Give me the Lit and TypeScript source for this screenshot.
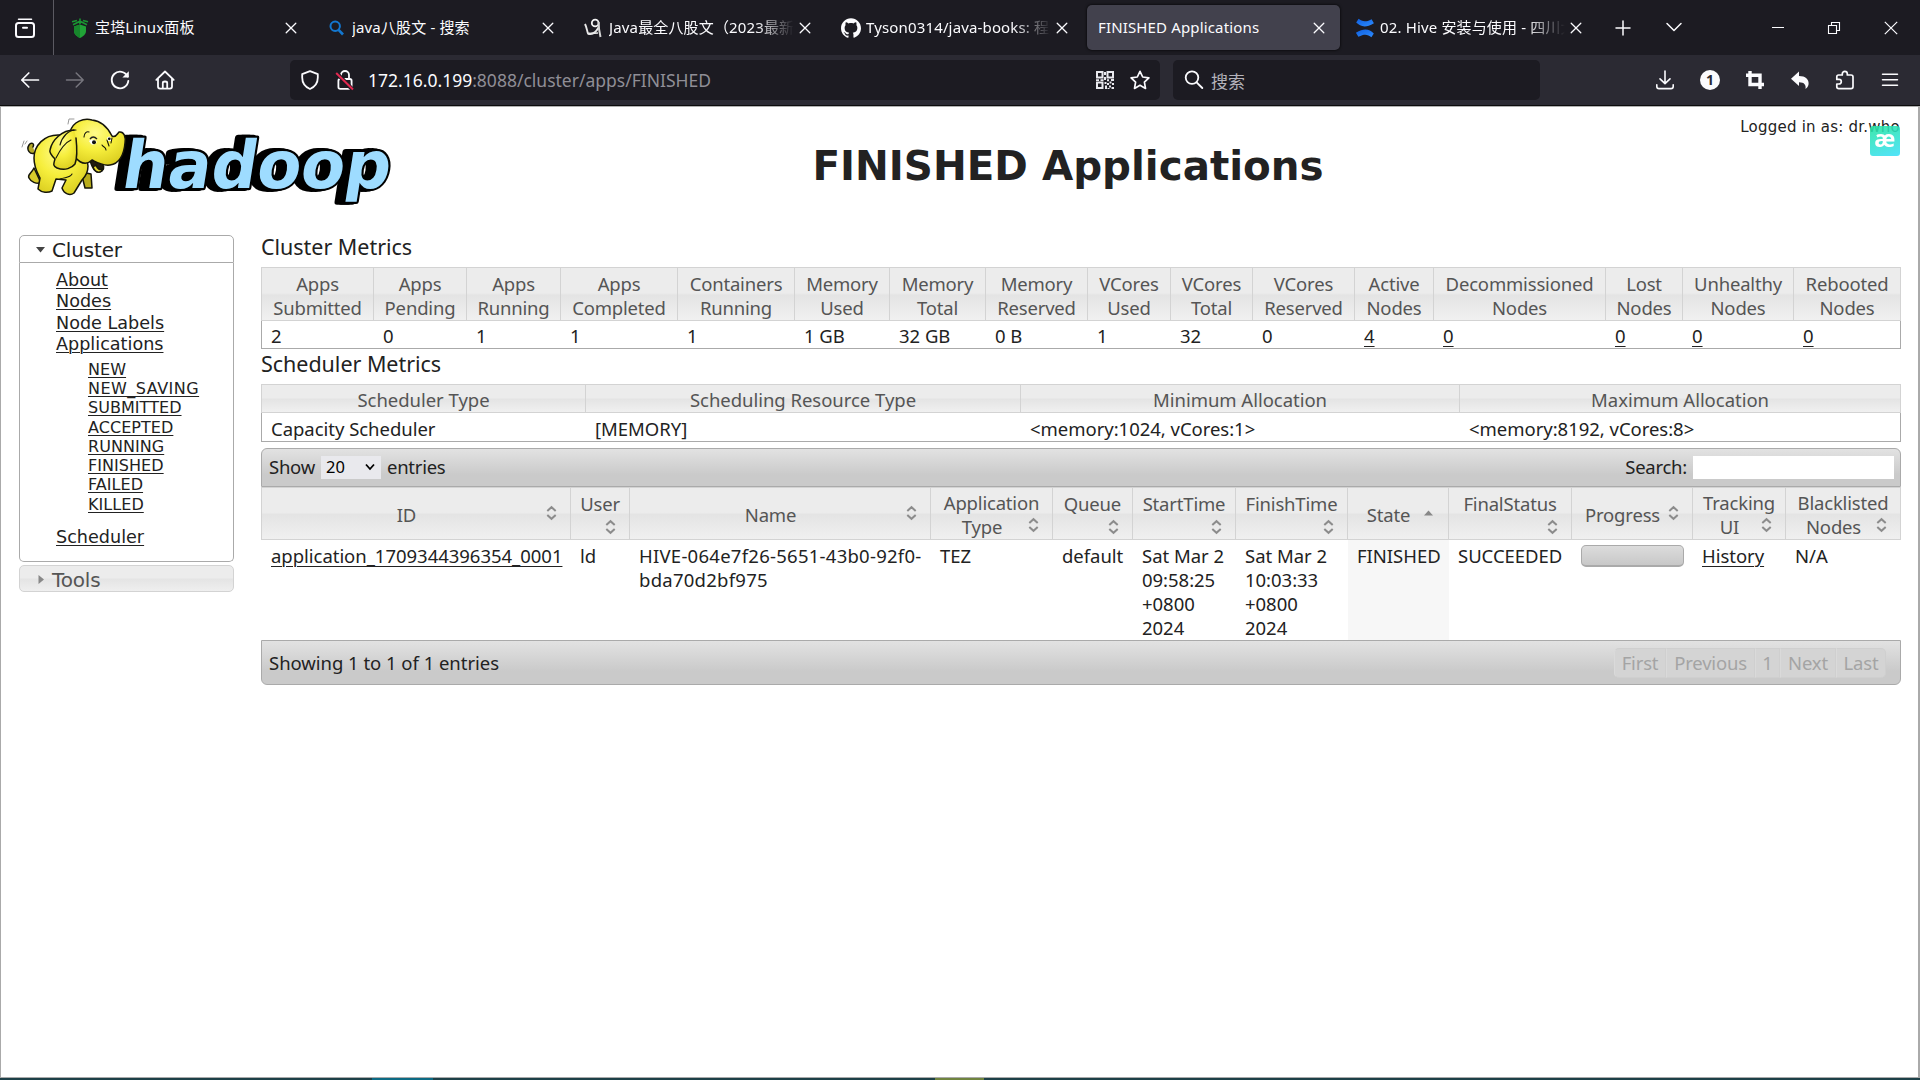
import { LitElement, html, svg, css, nothing } from "lit";
import { customElement } from "lit/decorators.js";

const columns = (cuts: number[]) =>
  `grid-template-columns:${cuts.slice(1).map((c, i) => `${c - cuts[i]}px`).join(" ")}`;

const base = css`
  * { box-sizing: border-box; }
  :host { display: block; font-family: "Noto Sans", "Noto Sans CJK SC", sans-serif; }
  svg { display: block; flex: none; overflow: visible; }
`;

/* ---------- browser chrome ---------- */

const stroke = (d: string, w = 1.6, color = "#fbfbfe") =>
  svg`<path d=${d} fill="none" stroke=${color} stroke-width=${w} stroke-linecap="round" stroke-linejoin="round"/>`;

const ic = (content: unknown, size = 20) =>
  html`<svg width=${size} height=${size} viewBox="0 0 20 20">${content}</svg>`;

const icons = {
  view: ic(svg`${stroke("M3.5 1.3H16.5", 1.5)}<rect x="1" y="5" width="18" height="14" rx="2.5" fill="none" stroke="#fbfbfe" stroke-width="2"/>${stroke("M8 9.8H12", 2)}`),
  bt: ic(svg`<path d="M4 8.5L10 6.5L16 8.5V13C16 16.5 13 18.5 10 20C7 18.5 4 16.5 4 13Z" fill="#21a437"/><path d="M4 8.5L10 6.5V20C7 18.5 4 16.5 4 13Z" fill="#17862c"/><path d="M2 3.8L7 2.4M10 .5V6M18 3.8L13 2.4M3 6.8L10 3.2L17 6.8" stroke="#1a9632" stroke-width="1.6" fill="none"/>`),
  bing: ic(svg`<circle cx="8.2" cy="8.2" r="4.7" fill="none" stroke="#1377d0" stroke-width="2"/><path d="M11.6 11.8L16 16.5" stroke="#1377d0" stroke-width="2.6"/>`),
  nine: ic(svg`<path d="M1 6C3 10 3 13 4 15.5C8 17 12 14 14.5 9.5" fill="none" stroke="#e8e8e8" stroke-width="1.9"/><circle cx="11.2" cy="5" r="3.4" fill="none" stroke="#f4f4f4" stroke-width="1.8"/><path d="M14.6 4C14.6 9 14.8 12 16.5 19" fill="none" stroke="#d5d5d5" stroke-width="2"/><path d="M4 15.6L14 15" stroke="#e8e8e8" stroke-width="1.6"/>`),
  github: html`<svg width="20" height="20" viewBox="0 0 24 24"><path fill="#fbfbfe" d="M12 .297c-6.63 0-12 5.373-12 12 0 5.303 3.438 9.8 8.205 11.385.6.113.82-.258.82-.577 0-.285-.01-1.04-.015-2.04-3.338.724-4.042-1.61-4.042-1.61C4.422 18.07 3.633 17.7 3.633 17.7c-1.087-.744.084-.729.084-.729 1.205.084 1.838 1.236 1.838 1.236 1.07 1.835 2.809 1.305 3.495.998.108-.776.417-1.305.76-1.605-2.665-.3-5.466-1.332-5.466-5.93 0-1.31.465-2.38 1.235-3.22-.135-.303-.54-1.523.105-3.176 0 0 1.005-.322 3.3 1.23.96-.267 1.98-.399 3-.405 1.02.006 2.04.138 3 .405 2.28-1.552 3.285-1.23 3.285-1.23.645 1.653.24 2.873.12 3.176.765.84 1.23 1.91 1.23 3.22 0 4.61-2.805 5.625-5.475 5.92.42.36.81 1.096.81 2.22 0 1.606-.015 2.896-.015 3.286 0 .315.21.69.825.57C20.565 22.092 24 17.592 24 12.297c0-6.627-5.373-12-12-12"/></svg>`,
  confluence: ic(svg`<defs><linearGradient id="cf" x1="0" y1="0" x2="1" y2="1"><stop offset="0" stop-color="#0f5fe0"/><stop offset="1" stop-color="#2d8cff"/></linearGradient></defs><path d="M1.2 4.6L3.6 .8C7 3.3 10 4.8 16.6 1.2L18.9 5.2C10 10.6 5.5 8.3 1.2 4.6Z" fill="url(#cf)"/><path d="M18.8 15.4L16.4 19.2C13 16.7 10 15.2 3.4 18.8L.9 14.8C10 9.4 14.5 11.7 18.8 15.4Z" fill="url(#cf)"/>`),
  close: html`<svg width="12" height="12" viewBox="0 0 12 12">${stroke("M1.2 1.2L10.8 10.8M10.8 1.2L1.2 10.8", 1.3)}</svg>`,
  back: ic(stroke("M18.5 10H1.8M8.8 3L1.8 10L8.8 17", 1.7)),
  forward: ic(stroke("M1.5 10H18.2M11.2 3L18.2 10L11.2 17", 1.5, "#77767e")),
  reload: ic(svg`${stroke("M17.6 6.5A8.3 8.3 0 1 0 18.3 11", 1.9)}<path d="M18.8 1.2V7.6H12.4Z" fill="#fbfbfe"/>`),
  home: ic(svg`${stroke("M1.3 9.8L10 1.5L18.7 9.8M3 8.8V16.6Q3 18.6 5 18.6H15Q17 18.6 17 16.6V8.8M7.8 18.2V13Q7.8 11.5 10 11.5Q12.2 11.5 12.2 13V18.2", 1.8)}`),
  shield: ic(stroke("M10 1.2L17.8 4.2V7.5C17.8 13 14.5 17 10 19C5.500 17 2.200 13 2.200 7.500V4.200Z", 1.8)),
  lock: ic(svg`<rect x="3.4" y="9" width="13.2" height="9.8" rx="1.8" fill="none" stroke="#fbfbfe" stroke-width="1.8"/>${stroke("M6 8.500V5A4 4 0 0 1 14 5V8.500", 1.8)}<path d="M1.500 3L17.500 19.500" stroke="#1c1b22" stroke-width="4"/><path d="M1.200 3L18 19.500" stroke="#e22850" stroke-width="2"/>`),
  qr: ic(svg`<g fill="none" stroke="#e9e9ee" stroke-width="2"><rect x="2" y="2" width="5.500" height="5.500"/><rect x="12.500" y="2" width="5.500" height="5.500"/><rect x="2" y="12.500" width="5.500" height="5.500"/></g><path fill="#e9e9ee" d="M9 2h2v3H9zM9 7h2v3H9zM1 9.200h3v1.800H1zM5.500 9.200h3v1.800h-3zM12 9.200h2v2h-2zM16 9h3v2h-3zM9.500 12h2v2h-2zM12 13h2v2h-2zM14.500 11.500h2v2h-2zM17 13h2v2h-2zM10 15.500h2v3.500h-2zM14 15.500h2v2h-2zM16.500 17h2.500v2h-2.500zM12.500 18h2v1h-2z"/>`),
  star: ic(stroke("M10 1.300L12.700 7L18.900 7.800L14.400 12.100L15.500 18.400L10 15.300L4.500 18.400L5.600 12.100L1.100 7.800L7.300 7Z", 1.7)),
  search: ic(svg`<circle cx="8" cy="7.600" r="6.300" fill="none" stroke="#fbfbfe" stroke-width="1.800"/>${stroke("M12.600 12.400L18.300 18", 1.900)}`),
  download: ic(stroke("M10 1V13.500M5 8.800L10 13.600L15 8.800M1.800 14.800V16.500Q1.800 18.600 4 18.600H16Q18.200 18.600 18.200 16.500V14.800", 1.600)),
  crop: ic(svg`<path d="M5 1V14.500H19M1 5.200H15V19" fill="none" stroke="#fbfbfe" stroke-width="3.400"/>`),
  undo: ic(svg`<path d="M9 1.500V6C15.500 6 19 9.500 18.600 14C18.400 16 17 18 15.500 19C16.200 15 14.500 12.200 9 12.200V16L1 8.700Z" fill="#fbfbfe"/>`),
  puzzle: ic(stroke("M1.800 7.500V6.800Q1.800 5 3.600 5H7.300V3.800A2.500 2.500 0 0 1 12.300 3.800V5H16Q18 5 18 7V16.800Q18 18.700 16 18.700H3.800Q1.800 18.700 1.800 16.800V14H4A2.300 2.300 0 0 0 4 9.400H1.800Z", 1.700)),
  menu: ic(stroke("M2.500 4.300H17.500M2.500 9.800H17.500M2.500 15.300H17.500", 1.500)),
  plus: html`<svg width="16" height="16" viewBox="0 0 16 16">${stroke("M8 1V15M1 8H15", 1.500)}</svg>`,
  chevron: html`<svg width="16" height="16" viewBox="0 0 16 16">${stroke("M1 3.500L8 10.500L15 3.500", 1.500)}</svg>`,
  min: html`<svg width="12" height="12" viewBox="0 0 12 12"><path d="M0 5.500H12" stroke="#fbfbfe"/></svg>`,
  restore: html`<svg width="12" height="12" viewBox="0 0 12 12"><path d="M.5 3.500H8.500V11.500H.5ZM3.500 3V.5H11.500V8.500H9" fill="none" stroke="#fbfbfe" stroke-width="1.100"/></svg>`,
  winClose: html`<svg width="14" height="14" viewBox="0 0 14 14"><path d="M.8 .8L13.200 13.200M13.200 .8L.8 13.200" stroke="#fbfbfe" stroke-width="1.200"/></svg>`,
};

const TABS = [
  { icon: icons.bt, title: "宝塔Linux面板" },
  { icon: icons.bing, title: "java八股文 - 搜索" },
  { icon: icons.nine, title: "Java最全八股文（2023最新整", fade: true },
  { icon: icons.github, title: "Tyson0314/java-books: 程序", fade: true },
  { icon: null, title: "FINISHED Applications", active: true },
  { icon: icons.confluence, title: "02. Hive 安装与使用 - 四川大", fade: true },
];

@customElement("browser-chrome")
export class BrowserChrome extends LitElement {
  static styles = [base, css`
    .tabs { display: flex; height: 55px; background: #1c1b22; color: #fbfbfe; }
    .view { width: 54px; display: flex; align-items: center; justify-content: center; padding-right: 4px; border-right: 1px solid #5b5a62; }
    .strip { display: flex; gap: 4px; padding: 5px 0 5px 5px; }
    .tab { width: 253px; height: 45px; padding: 0 15px 0 11px; display: flex; align-items: center; border-radius: 5px; font-size: 15px; letter-spacing: 0.15px; }
    .active { background: #42414d; box-shadow: 0 0 3px #000; }
    .icon { width: 25px; flex: none; }
    .title { flex: 1; min-width: 0; white-space: nowrap; overflow: hidden; line-height: 22px; padding-bottom: 1px; }
    .fade { margin-right: 1px; -webkit-mask-image: linear-gradient(to left, transparent 4px, #000 42px); mask-image: linear-gradient(to left, transparent 4px, #000 42px); }
    .extra { display: flex; align-items: center; gap: 35px; padding-left: 18px; }
    .window { display: flex; align-items: center; gap: 44px; margin-left: auto; padding-right: 22px; }
    .bar { display: flex; align-items: center; height: 50px; background: #2b2a33; padding: 0 20px; }
    .nav { display: flex; gap: 25px; width: 270px; }
    .field { height: 40px; border-radius: 5px; background: #1c1b22; display: flex; align-items: center; color: #fbfbfe; font-size: 17.500px; letter-spacing: 0; white-space: nowrap; }
    .url { width: 870px; padding: 0 10px 0 10px; gap: 15px; }
    .address { flex: 1; margin-left: -2px; }
    .dim { color: #8f8e96; }
    .find { width: 367px; margin-left: 13px; padding-left: 11px; gap: 7px; color: #b4b3ba; font-size: 17px; }
    .tools { display: flex; align-items: center; gap: 25px; margin-left: auto; }
    .count { width: 20px; height: 20px; border-radius: 50%; background: #fbfbfe; color: #2b2a33; font: bold 14px/20px "Noto Sans", sans-serif; text-align: center; }
    .edge { height: 2px; background: #b0b0b0; border-top: 1px solid #0c0c0d; }
  `];
  render() {
    return html`
      <div class="tabs">
        <div class="view">${icons.view}</div>
        <div class="strip">
          ${TABS.map(t => html`<div class="tab ${t.active ? "active" : ""}">
            ${t.icon ? html`<span class="icon">${t.icon}</span>` : nothing}
            <span class="title ${t.fade ? "fade" : ""}">${t.title}</span>${icons.close}
          </div>`)}
        </div>
        <div class="extra">${icons.plus}${icons.chevron}</div>
        <div class="window">${icons.min}${icons.restore}${icons.winClose}</div>
      </div>
      <div class="bar">
        <div class="nav">${icons.back}${icons.forward}${icons.reload}${icons.home}</div>
        <div class="field url">${icons.shield}${icons.lock}
          <span class="address">172.16.0.199<span class="dim">:8088/cluster/apps/FINISHED</span></span>
          ${icons.qr}${icons.star}</div>
        <div class="field find">${icons.search}<span>搜索</span></div>
        <div class="tools">${icons.download}<span class="count">1</span>${icons.crop}${icons.undo}${icons.puzzle}${icons.menu}</div>
      </div>
      <div class="edge"></div>`;
  }
}

/* ---------- hadoop logo ---------- */

@customElement("hadoop-logo")
export class HadoopLogo extends LitElement {
  static styles = [base, css`
    .word { font: bold 66px "DejaVu Sans", sans-serif; }
  `];
  render() {
    const word = (x: number, y: number, fill: string, w: number, line: string) => svg`
      <text class="word" transform="translate(${x} ${y}) skewX(-9)" textLength="268" lengthAdjust="spacingAndGlyphs"
        fill=${fill} stroke=${line} stroke-width=${w} stroke-linejoin="round" paint-order="stroke">hadoop</text>`;
    return html`<svg width="374" height="92" viewBox="20 116 374 92">
      <defs>
        <radialGradient id="skin" cx=".45" cy=".3" r=".75"><stop offset="0" stop-color="#fffb8a"/><stop offset=".5" stop-color="#f6ee3c"/><stop offset="1" stop-color="#d9cc1e"/></radialGradient>
      </defs>
      ${word(112, 188, "#000", 6, "#000")}
      ${word(116, 188, "#000", 6, "#000")}
      ${word(120, 188, "#9edcff", 4.500, "#000")}
      <g stroke="#16160a" stroke-width="1.500" stroke-linejoin="round" stroke-linecap="round">
        <path d="M35 153C30 155 26 150 29 145C31 142 35 143 33 147" fill="#b5a92a"/>
        <path d="M22 147L24 141M25 144L27 141M68 124L69 119L74 119" fill="none" stroke="#999" stroke-width="1"/>
        <path d="M81 172L85 188H92L91 174Z" fill="#b9ad1c"/>
        <path d="M34 168C31 174 27 175 29 178C31 182 36 184 41 183Z" fill="#d9cc2c"/>
        <path d="M60 135C44 134 34 146 34 158C34 168 38 174 40 178L38 189C42 193 48 193 52 191L56 179L66 180L62 188C64 194 70 196 74 193L82 180C86 176 88 172 88 166L84 140Z" fill="url(#skin)"/>
        <path d="M90 160C93 172 98 174 102 171C105 168 104 165 100 162Z" fill="#221c10"/>
        <path d="M93 167C96 174 101 173 103 169Q98 171 96 165Z" fill="#e7dc30"/>
        <path d="M70 132C73 121 84 118 92 120C102 121 108 128 112 136C116 138 117 134 119 132C124 131 126 137 125 143C124 155 119 164 110 165C102 166 96 162 92 160C84 168 75 160 72 150Z" fill="url(#skin)"/>
        <path d="M74 130C62 130 52 140 50 150C49 153 52 156 55 159C54 163 52 166 57 168C65 171 72 168 75 164C78 156 77 147 76 138" fill="url(#skin)"/>
        <path d="M76 130C68 130 62 137 60 145M71 140C64 143 60 150 56 158M102 145C103 147 106 147 106 150M107 140L109 146M112 138L111 143M84 137C84 133 87 131 89 132M60 179C66 177 70 178 72 174" fill="none" stroke-width="1.100"/>
      </g>
      <path d="M89 141Q93 137 97 142Q94 146 91 144Z" fill="#fff"/><circle cx="94" cy="142.300" r="2" fill="#111"/>
      <path d="M107 138Q109 135 111 138V141H108Z" fill="#fff"/><circle cx="109.300" cy="138.800" r="1.400" fill="#111"/>
      <path d="M90 139Q93 135 97 139" fill="none" stroke="#222" stroke-width="1.300"/>
    </svg>`;
  }
}

/* ---------- sidebar ---------- */

@customElement("side-menu")
export class SideMenu extends LitElement {
  static styles = [base, css`
    :host { width: 215px; font-family: "DejaVu Sans", Verdana, sans-serif; color: #222; }
    .head { height: 28px; border: 1px solid #aaa; border-radius: 5px 5px 0 0; display: flex; align-items: center; gap: 5px; padding: 2px 0 0 15px; font-size: 20px; letter-spacing: -0.15px; }
    .body { height: 299px; border: 1px solid #aaa; border-top: 0; border-radius: 0 0 5px 5px; padding: 7px 0 0 36px; font-size: 17.600px; line-height: 21.400px; letter-spacing: 0; }
    .closed { margin-top: 3px; height: 27px; border-color: #d3d3d3; border-radius: 5px; color: #555; background: linear-gradient(#ececec 0 48%, #e4e4e4 52%, #efefef); }
    a { display: block; text-decoration: underline; text-underline-offset: 2px; text-decoration-thickness: 1px; }
    .sub { padding: 4px 0 13px 32px; font-size: 16px; line-height: 19.300px; letter-spacing: 0.05px; }
    .wide { letter-spacing: 0.480px; }
  `];
  render() {
    return html`
      <div class="head"><svg width="12" height="12" viewBox="0 0 12 12"><path d="M1 3H10L5.500 8.500Z" fill="#444"/></svg>Cluster</div>
      <div class="body">
        ${["About", "Nodes", "Node Labels", "Applications"].map(x => html`<a>${x}</a>`)}
        <div class="sub">${["NEW", "NEW_SAVING", "SUBMITTED", "ACCEPTED", "RUNNING", "FINISHED", "FAILED", "KILLED"].map(x => html`<a class=${x.includes("_") ? "wide" : ""}>${x}</a>`)}</div>
        <a>Scheduler</a>
      </div>
      <div class="head closed"><svg width="12" height="12" viewBox="0 0 12 12"><path d="M3.500 1L9 5.500L3.500 10Z" fill="#888"/></svg>Tools</div>`;
  }
}

/* ---------- content tables ---------- */

const METRIC_CUTS = [261, 373, 466, 560, 677, 794, 889, 985, 1087, 1170, 1252, 1354, 1433, 1605, 1682, 1793, 1901];
const METRICS: [string, string, string, boolean?][] = [
  ["Apps", "Submitted", "2"], ["Apps", "Pending", "0"], ["Apps", "Running", "1"], ["Apps", "Completed", "1"],
  ["Containers", "Running", "1"], ["Memory", "Used", "1 GB"], ["Memory", "Total", "32 GB"], ["Memory", "Reserved", "0 B"],
  ["VCores", "Used", "1"], ["VCores", "Total", "32"], ["VCores", "Reserved", "0"], ["Active", "Nodes", "4", true],
  ["Decommissioned", "Nodes", "0", true], ["Lost", "Nodes", "0", true], ["Unhealthy", "Nodes", "0", true], ["Rebooted", "Nodes", "0", true],
];
const SCHED_CUTS = [261, 585, 1020, 1459, 1901];
const SCHED = [
  ["Scheduler Type", "Capacity Scheduler"], ["Scheduling Resource Type", "[MEMORY]"],
  ["Minimum Allocation", "<memory:1024, vCores:1>"], ["Maximum Allocation", "<memory:8192, vCores:8>"],
];
const APP_CUTS = [261, 570, 629, 930, 1052, 1132, 1235, 1347, 1448, 1571, 1692, 1785, 1901];
type Kind = "one" | "two" | "drop";
const APP_HEADS: [Kind, string, string?][] = [
  ["one", "ID"], ["drop", "User"], ["one", "Name"], ["two", "Application", "Type"], ["drop", "Queue"], ["drop", "StartTime"],
  ["drop", "FinishTime"], ["one", "State"], ["drop", "FinalStatus"], ["one", "Progress"], ["two", "Tracking", "UI"], ["two", "Blacklisted", "Nodes"],
];

const sortBoth = html`<svg class="sort" width="19" height="14" viewBox="0 0 19 14"><path d="M5.300 5L9.500 1.200L13.700 5M5.300 9L9.500 12.800L13.700 9" fill="none" stroke="#8c8c8c" stroke-width="2"/></svg>`;
const sortUp = html`<svg class="sort" width="19" height="14" viewBox="0 0 19 14"><path d="M4 9.500L8.500 4.500L13 9.500Z" fill="#888"/></svg>`;

@customElement("cluster-content")
export class ClusterContent extends LitElement {
  static styles = [base, css`
    :host { width: 1640px; color: #222; font-size: 18.500px; line-height: 24px; letter-spacing: -0.03px; }
    h3 { margin: 0; font-size: 21.500px; font-weight: normal; letter-spacing: -0.03px; }
    .first { height: 32px; line-height: 23px; }
    .second { height: 35px; line-height: 29px; }
    .grid { display: grid; white-space: nowrap; }
    .th { border: 1px solid #d3d3d3; border-right: 0; color: #555; text-align: center; letter-spacing: -0.180px; background: linear-gradient(#ececec 0 48%, #e4e4e4 52%, #f0f0f0); }
    .th:last-child { border-right: 1px solid #d3d3d3; }
    .metric { height: 54px; padding-top: 4px; }
    .sched { height: 29px; padding-top: 3px; letter-spacing: -0.030px; }
    .rows { border: 1px solid #aaa; border-top: 0; height: 28px; padding-top: 3px; }
    .rows .td:first-child { padding-left: 9px; }
    .rows .td:not(:first-child) { margin-left: -1px; }
    .sched-row { height: 29px; padding-top: 4px; }
    .td { padding-left: 10px; }
    .name { letter-spacing: 0.260px; }
    .link { text-decoration: underline; text-underline-offset: 3px; text-decoration-thickness: 1px; }
    .bar { display: flex; align-items: center; border: 1px solid #aaa; background: linear-gradient(#e2e2e2, #cacaca 70%, #cacaca); padding: 0 6px 0 7px; }
    .top { height: 39px; margin-top: 6px; border-radius: 6px 6px 0 0; padding-bottom: 1px; letter-spacing: -0.250px; }
    .bottom { height: 45px; border-radius: 0 0 6px 6px; padding-right: 14px; }
    .select { width: 60px; height: 23px; margin: 0 6px; padding: 0 6px 0 5px; background: #e9e9ed; display: flex; align-items: center; justify-content: space-between; color: #000; font-size: 16.500px; letter-spacing: 0; }
    .search { margin-left: auto; }
    .input { width: 201px; height: 23px; background: #fff; margin-left: 6px; }
    .head { height: 53px; display: flex; flex-direction: column; padding: 3px 9px 0 9px; }
    .head div { width: 100%; }
    .line { display: flex; }
    .line span { flex: 1; }
    .one { padding-top: 15px; }
    .drop { padding: 4px 9px 0 9px; align-items: center; }
    .drop div { display: flex; justify-content: center; }
    .drop .sort { align-self: flex-end; margin-top: 4px; }
    .line .sort { margin-top: 3px; }
    .app { height: 100px; }
    .app .td { padding-top: 4px; }
    .app .bar-cell { padding-top: 5px; }
    .state { background: #f7f7f7; margin: 0 -1px 0 1px; padding-left: 9px !important; }
    .progress { width: 103px; height: 22px; border: 1px solid #aaa; border-bottom-width: 2px; border-radius: 5px; background: linear-gradient(#dcdcdc, #c8c8c8); }
    .pager { display: flex; margin-left: auto; color: #a4a4a4; letter-spacing: -0.200px; }
    .page { height: 30px; line-height: 28px; text-align: center; background: #d4d4d4; border: 1px solid #cfcfcf; border-left-color: #dadada; }
    .page:first-child { border-radius: 5px 0 0 5px; }
    .page:last-child { border-radius: 0 5px 5px 0; }
  `];

  private head([kind, a, b]: [Kind, string, string?]) {
    const sort = a === "State" ? sortUp : sortBoth;
    if (kind === "drop") return html`<div class="th head drop"><div>${a}</div>${sort}</div>`;
    if (kind === "one") return html`<div class="th head one"><div class="line"><span>${a}</span>${sort}</div></div>`;
    return html`<div class="th head"><div>${a}</div><div class="line"><span>${b}</span>${sort}</div></div>`;
  }

  render() {
    return html`
      <h3 class="first">Cluster Metrics</h3>
      <div class="grid" style=${columns(METRIC_CUTS)}>${METRICS.map(m => html`<div class="th metric">${m[0]}<br>${m[1]}</div>`)}</div>
      <div class="grid rows" style=${columns(METRIC_CUTS)}>${METRICS.map(m => html`<div class="td"><span class=${m[3] ? "link" : ""}>${m[2]}</span></div>`)}</div>
      <h3 class="second">Scheduler Metrics</h3>
      <div class="grid" style=${columns(SCHED_CUTS)}>${SCHED.map(s => html`<div class="th sched">${s[0]}</div>`)}</div>
      <div class="grid rows sched-row" style=${columns(SCHED_CUTS)}>${SCHED.map(s => html`<div class="td">${s[1]}</div>`)}</div>
      <div class="bar top">
        Show <span class="select">20<svg width="10" height="8" viewBox="0 0 10 8"><path d="M1 1.500L5 6L9 1.500" fill="none" stroke="#000" stroke-width="1.800"/></svg></span> entries
        <span class="search">Search:</span><span class="input"></span>
      </div>
      <div class="grid" style=${columns(APP_CUTS)}>${APP_HEADS.map(h => this.head(h))}</div>
      <div class="grid app" style=${columns(APP_CUTS)}>
        <div class="td"><span class="link">application_1709344396354_0001</span></div>
        <div class="td">ld</div>
        <div class="td name">HIVE-064e7f26-5651-43b0-92f0-<br>bda70d2bf975</div>
        <div class="td">TEZ</div>
        <div class="td">default</div>
        <div class="td">Sat Mar 2<br>09:58:25<br>+0800<br>2024</div>
        <div class="td">Sat Mar 2<br>10:03:33<br>+0800<br>2024</div>
        <div class="td state">FINISHED</div>
        <div class="td">SUCCEEDED</div>
        <div class="td bar-cell"><div class="progress"></div></div>
        <div class="td"><span class="link">History</span></div>
        <div class="td">N/A</div>
      </div>
      <div class="bar bottom">Showing 1 to 1 of 1 entries
        <div class="pager">${([["First", 52], ["Previous", 89], ["1", 25], ["Next", 56], ["Last", 50]] as [string, number][]).map(
          ([label, w]) => html`<span class="page" style="width:${w}px">${label}</span>`)}</div>
      </div>`;
  }
}

@customElement("app-root")
export class AppRoot extends LitElement {
  static styles = [base, css`
    :host { width: 1920px; height: 1080px; background: #fff; overflow: hidden; display: flex; flex-direction: column; }
    .page { flex: 1; border: 1px solid #aaa; border-top: 0; border-width: 0 2px 1px 1px; }
    .banner { display: grid; grid-template-columns: 374px 1fr 210px; height: 128px; padding: 9px 18px 0 19px; }
    h1 { margin: 0; padding: 23px 0 0 52px; text-align: center; font: bold 40.400px/54px "DejaVu Sans", Verdana, sans-serif; color: #222; white-space: nowrap; }
    .user { position: relative; padding-top: 1px; text-align: right; font: 15px/20px "DejaVu Sans", Verdana, sans-serif; letter-spacing: 0.230px; color: #222; white-space: nowrap; }
    .badge { position: absolute; right: 0; top: 10px; width: 30px; height: 30px; border-radius: 3px; background: linear-gradient(160deg, #25e5a0, #3ce0fb); opacity: .88; color: #fff; font: bold 23px/25px "Noto Sans", sans-serif; text-align: center; }
    .main { display: flex; gap: 27px; padding-left: 18px; }
    .task { display: flex; height: 2px; background: #1d4048; padding-left: 372px; gap: 502px; }
    .t1 { width: 61px; background: #0c6a84; }
    .t2 { width: 49px; background: #70843f; }
  `];
  render() {
    return html`
      <browser-chrome></browser-chrome>
      <div class="page">
        <div class="banner">
          <hadoop-logo></hadoop-logo>
          <h1>FINISHED Applications</h1>
          <div class="user">Logged in as: dr.who<span class="badge">æ</span></div>
        </div>
        <div class="main"><side-menu></side-menu><cluster-content></cluster-content></div>
      </div>
      <div class="task"><span class="t1"></span><span class="t2"></span></div>`;
  }
}
